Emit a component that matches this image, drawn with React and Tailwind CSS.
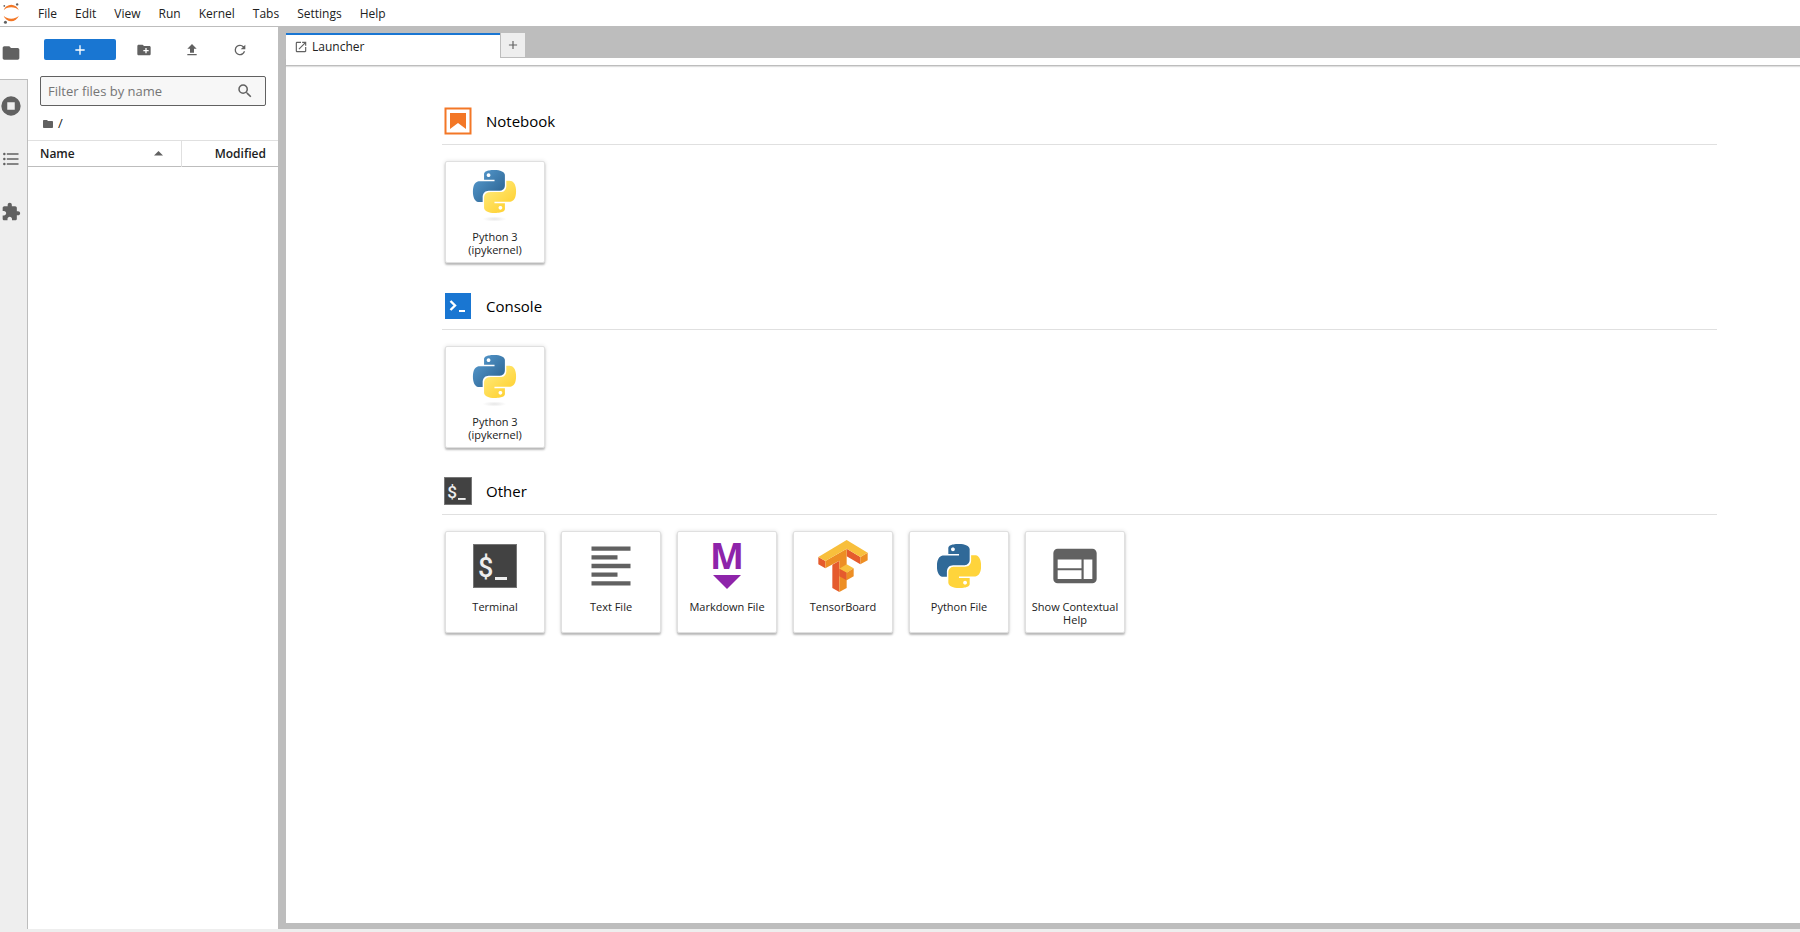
import React, { useState } from 'react'

const MENUS = ['File', 'Edit', 'View', 'Run', 'Kernel', 'Tabs', 'Settings', 'Help']

const PATHS = {
  folder: 'M10 4H4c-1.1 0-1.99.9-1.99 2L2 18c0 1.1.9 2 2 2h16c1.1 0 2-.9 2-2V8c0-1.1-.9-2-2-2h-8l-2-2z',
  newFolder: 'M20 6h-8l-2-2H4c-1.11 0-1.99.89-1.99 2L2 18c0 1.11.89 2 2 2h16c1.11 0 2-.89 2-2V8c0-1.11-.89-2-2-2zm-1 8h-3v3h-2v-3h-3v-2h3V9h2v3h3v2z',
  upload: 'M9 16h6v-6h4l-7-7-7 7h4zm-4 2h14v2H5z',
  refresh: 'M17.65 6.35A7.95 7.95 0 0 0 12 4a8 8 0 1 0 7.73 10h-2.08A6 6 0 1 1 12 6c1.66 0 3.14.69 4.22 1.78L13 11h7V4z',
  add: 'M19 13h-6v6h-2v-6H5v-2h6V5h2v6h6v2z',
  search: 'M15.5 14h-.79l-.28-.27A6.471 6.471 0 0 0 16 9.5 6.5 6.5 0 1 0 9.5 16c1.61 0 3.09-.59 4.23-1.57l.27.28v.79l5 4.99L20.49 19l-4.99-5zm-6 0C7.01 14 5 11.99 5 9.5S7.01 5 9.5 5 14 7.01 14 9.5 11.99 14 9.5 14z',
  stop: 'M12 .4a11.6 11.6 0 1 0 0 23.2a11.6 11.6 0 1 0 0-23.2zM7.5 7.5h9v9h-9z',
  toc: 'M7 5h14v2H7zM7 11h14v2H7zM7 17h14v2H7zM4 4.5a1.5 1.5 0 1 1 0 3a1.5 1.5 0 0 1 0-3zM4 10.5a1.5 1.5 0 1 1 0 3a1.5 1.5 0 0 1 0-3zM4 16.5a1.5 1.5 0 1 1 0 3a1.5 1.5 0 0 1 0-3z',
  extension: 'M20.5 11H19V7c0-1.1-.9-2-2-2h-4V3.5C13 2.12 11.88 1 10.5 1S8 2.12 8 3.5V5H4c-1.1 0-1.99.9-1.99 2v3.8H3.5c1.49 0 2.7 1.21 2.7 2.7s-1.21 2.7-2.7 2.7H2V20c0 1.1.9 2 2 2h3.8v-1.5c0-1.49 1.21-2.7 2.7-2.7 1.49 0 2.7 1.21 2.7 2.7V22H17c1.1 0 2-.9 2-2v-4h1.5c1.38 0 2.5-1.12 2.5-2.5S21.88 11 20.5 11z',
  launch: 'M19 19H5V5h7V3H5a2 2 0 0 0-2 2v14a2 2 0 0 0 2 2h14c1.1 0 2-.9 2-2v-7h-2v7zM14 3v2h3.59l-9.83 9.83 1.41 1.41L19 6.41V10h2V3h-7z',
  textFile: 'M15 15H3v2h12v-2zm0-8H3v2h12V7zM3 13h18v-2H3v2zm0 8h18v-2H3v2zM3 3v2h18V3H3z',
  inspector: 'M20 4H4c-1.1 0-1.99.9-1.99 2L2 18c0 1.1.9 2 2 2h16c1.1 0 2-.9 2-2V6c0-1.1-.9-2-2-2zm-5 14H4v-4h11v4zm0-5H4V9h11v4zm5 5h-4V9h4v9z',
}

function Icon({ name, className = 'size-4 text-[#616161]' }) {
  return (
    <svg viewBox="0 0 24 24" className={className} fill="currentColor" fillRule="evenodd" aria-hidden="true">
      <path d={PATHS[name]} />
    </svg>
  )
}

function JupyterLogo() {
  return (
    <svg viewBox="0 0 39 51" className="h-[21px] w-4" aria-hidden="true">
      <g fill="#f37726">
        <path transform="translate(1.7 31)" d="M18.26 7.13C10.41 7.13 3.56 4.26 0 0c1.33 3.82 3.8 7.13 7.07 9.47a19.3 19.3 0 0 0 22.4 0c3.27-2.34 5.74-5.65 7.07-9.47-3.57 4.26-10.43 7.13-18.28 7.13z" />
        <path transform="translate(1.7 4.5)" d="M18.27 5.94c7.85 0 14.71 2.88 18.27 7.13-1.33-3.82-3.8-7.13-7.07-9.47a19.3 19.3 0 0 0-22.4 0C3.8 5.94 1.33 9.25 0 13.07c3.57-4.25 10.42-7.13 18.27-7.13z" />
      </g>
      <g fill="#616161">
        <circle cx="34.5" cy="3.4" r="2.9" />
        <circle cx="6" cy="46.8" r="3.7" />
        <circle cx="3.2" cy="7" r="2.2" />
      </g>
    </svg>
  )
}

function PythonShape({ blue, yellow }) {
  return (
    <>
      <path fill={blue} d="M14.25.18l.9.2.73.26.59.3.45.32.34.34.25.34.16.33.1.3.04.26.02.2-.01.13V8.5l-.05.63-.13.55-.21.46-.26.38-.3.31-.33.25-.35.19-.35.14-.33.1-.3.07-.26.04-.21.02H8.77l-.69.05-.59.14-.5.22-.41.27-.33.32-.27.35-.2.36-.15.37-.1.35-.07.32-.04.27-.02.21v3.06H3.17l-.21-.03-.28-.07-.32-.12-.35-.18-.36-.26-.36-.36-.35-.46-.32-.59-.28-.73-.21-.88-.14-1.05-.05-1.23.06-1.22.16-1.04.24-.87.32-.71.36-.57.4-.44.42-.33.42-.24.4-.16.36-.1.32-.05.24-.01h.16l.06.01h8.16v-.83H6.18l-.01-2.75-.02-.37.05-.34.11-.31.17-.28.25-.26.31-.23.38-.2.44-.18.51-.15.58-.12.64-.1.71-.06.77-.04.84-.02 1.27.05zm-6.3 1.98l-.23.33-.08.41.08.41.23.34.33.22.41.09.41-.09.33-.22.23-.34.08-.41-.08-.41-.23-.33-.33-.22-.41-.09-.41.09z" />
      <path fill={yellow} d="M21.04 6.11l.28.06.32.12.35.18.36.27.36.35.35.47.32.59.28.73.21.88.14 1.04.05 1.23-.06 1.23-.16 1.04-.24.86-.32.71-.36.57-.4.45-.42.33-.42.24-.4.16-.36.09-.32.05-.24.02-.16-.01h-8.22v.82h5.84l.01 2.76.02.36-.05.34-.11.31-.17.29-.25.25-.31.24-.38.2-.44.17-.51.15-.58.13-.64.09-.71.07-.77.04-.84.01-1.27-.04-1.07-.14-.9-.2-.73-.25-.59-.3-.45-.33-.34-.34-.25-.34-.16-.33-.1-.3-.04-.25-.02-.2.01-.13v-5.34l.05-.64.13-.54.21-.46.26-.38.3-.32.33-.24.35-.2.35-.14.33-.1.3-.06.26-.04.21-.02.13-.01h5.84l.69-.05.59-.14.5-.21.41-.28.33-.32.27-.35.2-.36.15-.36.1-.35.07-.32.04-.28.02-.21V6.07h2.09l.14.01zm-6.47 14.25l-.23.33-.08.41.08.41.23.33.33.23.41.08.41-.08.33-.23.23-.33.08-.41-.08-.41-.23-.33-.33-.23-.41-.08-.41.08z" />
    </>
  )
}

function KernelIcon({ id }) {
  return (
    <svg viewBox="0 0 52 52" className="size-[52px]" aria-hidden="true">
      <defs>
        <linearGradient id={`${id}-blue`} x1="0" y1="0" x2="0.8" y2="0.8">
          <stop offset="0" stopColor="#5a9fd4" />
          <stop offset="1" stopColor="#306998" />
        </linearGradient>
        <linearGradient id={`${id}-yellow`} x1="0.2" y1="0.2" x2="0.7" y2="0.8">
          <stop offset="0" stopColor="#ffe873" />
          <stop offset="1" stopColor="#ffd43b" />
        </linearGradient>
        <radialGradient id={`${id}-shadow`}>
          <stop offset="0" stopColor="#b8b8b8" stopOpacity="0.35" />
          <stop offset="1" stopColor="#b8b8b8" stopOpacity="0" />
        </radialGradient>
      </defs>
      <ellipse cx="25.500" cy="49" rx="12" ry="2.6" fill={`url(#${id}-shadow)`} />
      <g transform="translate(4 0) scale(1.79)">
        <PythonShape blue={`url(#${id}-blue)`} yellow={`url(#${id}-yellow)`} />
      </g>
    </svg>
  )
}

function PythonFileIcon() {
  return (
    <svg viewBox="0 0 24 24" className="size-11" aria-hidden="true">
      <PythonShape blue="#306998" yellow="#ffd43b" />
    </svg>
  )
}

function TerminalIcon({ className }) {
  return (
    <svg viewBox="0 0 44 44" className={className} aria-hidden="true">
      <rect x="0.5" y="0.5" width="43" height="43" fill="#424242" stroke="#757575" />
      <text x="5" y="33" fill="#eeeeee" fontFamily="Roboto, sans-serif" fontWeight="500" fontSize="27">$</text>
      <rect x="22" y="33" width="12" height="3" fill="#eeeeee" />
    </svg>
  )
}

function MarkdownIcon() {
  return (
    <svg viewBox="0 0 52 52" className="size-[52px] overflow-visible" fill="#8e24aa" aria-hidden="true">
      <text x="26" y="29" textAnchor="middle" fontFamily="'Open Sans', sans-serif" fontWeight="700" fontSize="36">M</text>
      <path d="M12 35h28L26 49z" />
    </svg>
  )
}

function TensorBoardIcon() {
  return (
    <svg viewBox="471 86 156 156" className="size-[52px]" aria-hidden="true">
      <path fill="#e55b2d" d="M475 137l21 12v22l-21-12zM517 160l21-12v94l-21-12zM560 112l41 25v22l-41-24z" />
      <path fill="#ed8e24" d="M496 149l64-37v118l-22 12v-94l-42 23zM601 137l22-13v23l-22 12z" />
      <path fill="#f8bf3c" d="M475 137l85-51 63 38-22 13-41-25-64 37zM538 172l22-13 21 12-21 13z" />
      <path fill="#e55b2d" d="M538 172l22 12v23l-22-12z" />
      <path fill="#ed8e24" d="M560 184l21-13v24l-21 12z" />
    </svg>
  )
}

function NotebookIcon() {
  return (
    <svg viewBox="0 0 28 28" className="size-7" aria-hidden="true">
      <rect x="1.5" y="1.5" width="25" height="25" fill="#fff" stroke="#f37726" strokeWidth="2" />
      <path fill="#f37726" d="M6 6h16v16l-8-6-8 6z" />
    </svg>
  )
}

function ConsoleIcon() {
  return (
    <svg viewBox="0 0 28 28" className="size-7" aria-hidden="true">
      <rect x="1" y="1" width="26" height="26" fill="#1976d2" />
      <path fill="none" stroke="#fff" strokeWidth="2.4" d="M6.500 9l4.500 4.500-4.500 4.500" />
      <path fill="#fff" d="M15 18h6v2h-6z" />
    </svg>
  )
}

const SECTIONS = [
  {
    title: 'Notebook',
    icon: <NotebookIcon />,
    cards: [{ label: 'Python 3 (ipykernel)', icon: <KernelIcon id="nb" /> }],
  },
  {
    title: 'Console',
    icon: <ConsoleIcon />,
    cards: [{ label: 'Python 3 (ipykernel)', icon: <KernelIcon id="console" /> }],
  },
  {
    title: 'Other',
    icon: <TerminalIcon className="size-7" />,
    cards: [
      { label: 'Terminal', icon: <TerminalIcon className="size-11" /> },
      { label: 'Text File', icon: <Icon name="textFile" className="size-[52px] text-[#616161]" /> },
      { label: 'Markdown File', icon: <MarkdownIcon /> },
      { label: 'TensorBoard', icon: <TensorBoardIcon /> },
      { label: 'Python File', icon: <PythonFileIcon /> },
      { label: 'Show Contextual Help', icon: <Icon name="inspector" className="size-[52px] text-[#616161]" /> },
    ],
  },
]

function Card({ label, icon }) {
  return (
    <button
      type="button"
      className="flex h-[102px] w-[100px] flex-col items-center rounded-xs border border-[#e0e0e0] bg-white pt-2 shadow-[0_2px_2px_rgba(0,0,0,0.24),0_0_4px_rgba(0,0,0,0.12)]"
    >
      <span className="flex size-[52px] shrink-0 items-center justify-center">{icon}</span>
      <span className="mt-2 px-1 text-center text-[11px] leading-[13px]">{label}</span>
    </button>
  )
}

function Section({ title, icon, cards }) {
  return (
    <section>
      <header className="flex items-center gap-3.5 border-b border-[#e0e0e0] pb-[9px] pl-0.5">
        {icon}
        <h2 className="text-[15px] leading-5 text-black">{title}</h2>
      </header>
      <div className="mt-4 flex flex-wrap gap-4 pl-[3px]">
        {cards.map(card => <Card key={card.label} {...card} />)}
      </div>
    </section>
  )
}

function SideBar() {
  return (
    <nav className="flex w-7 shrink-0 flex-col bg-[#eeeeee]">
      <button type="button" aria-label="File Browser" className="flex h-[52px] items-center bg-white pl-px">
        <Icon name="folder" className="size-5 text-[#616161]" />
      </button>
      <div className="flex flex-1 flex-col gap-px border-t border-r border-[#bdbdbd]">
        {[['stop', 'Running'], ['toc', 'Table of Contents'], ['extension', 'Extensions']].map(([name, label]) => (
          <button key={name} type="button" aria-label={label} className="flex h-[52px] items-center pl-px">
            <Icon name={name} className="size-5 text-[#616161]" />
          </button>
        ))}
      </div>
    </nav>
  )
}

function FileBrowser() {
  const [filter, setFilter] = useState('')

  return (
    <aside className="flex w-[250px] shrink-0 flex-col bg-white">
      <div className="flex gap-1 pt-3 pl-4">
        <button type="button" aria-label="New Launcher" className="flex h-[21px] w-[72px] shrink-0 items-center justify-center rounded-xs bg-[#1976d2]">
          <Icon name="add" className="size-4 text-white" />
        </button>
        <div className="flex">
          {[['newFolder', 'New Folder'], ['upload', 'Upload Files'], ['refresh', 'Refresh']].map(([name, label]) => (
            <button key={name} type="button" aria-label={label} className="flex h-[21px] w-12 items-center justify-center">
              <Icon name={name} />
            </button>
          ))}
        </div>
      </div>

      <label className="mx-3 mt-4 flex h-[30px] items-center rounded-xs border border-[#616161] bg-[#f7f7f7] pr-[11px] pl-[7px]">
        <input
          type="text"
          value={filter}
          onChange={e => setFilter(e.target.value)}
          placeholder="Filter files by name"
          aria-label="Filter files by name"
          className="min-w-0 flex-1 bg-transparent pt-0.5 text-[13px] outline-none placeholder:text-[#757575]"
        />
        <Icon name="search" className="size-[18px] text-[#616161]" />
      </label>

      <div className="flex h-[34px] items-center gap-1 pt-0.5 pl-[14px]">
        <Icon name="folder" className="size-3 text-[#616161]" />
        <a href="#" className="text-[13px]">/</a>
      </div>

      <table className="w-full border-y border-t-[#e0e0e0] border-b-[#bdbdbd] text-xs">
        <thead>
          <tr className="h-[26px]">
            <th className="border-r border-[#e0e0e0] pr-[18px] pl-3 text-left font-semibold">
              <span className="flex items-center justify-between">
                Name
                <svg viewBox="0 0 9 5" className="h-[5px] w-[9px]" aria-hidden="true"><path fill="#616161" d="M0 4.500h9L4.500 0z" /></svg>
              </span>
            </th>
            <th className="w-[97px] pr-3 text-right font-semibold">Modified</th>
          </tr>
        </thead>
      </table>
    </aside>
  )
}

function Dock() {
  return (
    <main className="flex min-w-0 flex-1 flex-col bg-[#bdbdbd] pt-1.5 pb-1.5 pl-2">
      <div className="flex h-[25px] shrink-0 items-start">
        <button type="button" className="flex h-[25px] w-[214px] items-center gap-1 border-t-2 border-[#1976d2] bg-white pl-2 text-xs">
          <Icon name="launch" className="size-3.5 text-[#616161]" />
          Launcher
        </button>
        <button type="button" aria-label="New tab" className="ml-px flex size-6 items-center justify-center bg-[#eeeeee]">
          <Icon name="add" className="size-3.5 text-[#616161]" />
        </button>
      </div>
      <div className="z-10 h-2 shrink-0 border-b border-[#bdbdbd] bg-white shadow-[0_1px_1px_rgba(0,0,0,0.12)]"></div>
      <div className="flex flex-1 flex-col gap-[29px] bg-white pt-[41px] pr-[83px] pb-6 pl-[156px]">
        {SECTIONS.map(section => <Section key={section.title} {...section} />)}
      </div>
    </main>
  )
}

export default function App() {
  return (
    <div className="flex min-h-screen flex-col bg-[#eeeeee] font-['Open_Sans','Noto_Sans',sans-serif] text-[#212121]">
      <header className="flex h-[27px] items-center border-b border-[#bdbdbd] bg-white pl-[3px]">
        <JupyterLogo />
        <nav className="ml-[10px] flex self-end text-xs">
          {MENUS.map(menu => (
            <button key={menu} type="button" className="px-[9px] leading-6">{menu}</button>
          ))}
        </nav>
      </header>
      <div className="mb-[3px] flex flex-1">
        <SideBar />
        <FileBrowser />
        <Dock />
      </div>
    </div>
  )
}
